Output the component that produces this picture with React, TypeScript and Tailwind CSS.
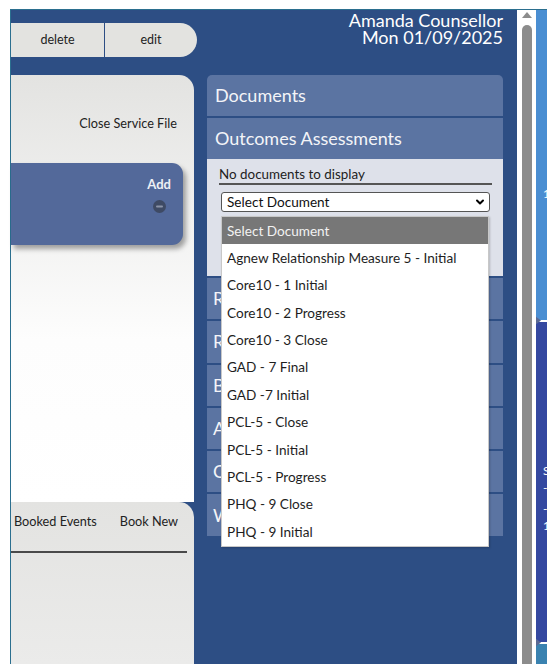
import { ChevronDown } from 'lucide-react';

const documentOptions = [
  'Agnew Relationship Measure 5 - Initial',
  'Core10 - 1 Initial',
  'Core10 - 2 Progress',
  'Core10 - 3 Close',
  'GAD - 7 Final',
  'GAD -7 Initial',
  'PCL-5 - Close',
  'PCL-5 - Initial',
  'PCL-5 - Progress',
  'PHQ - 9 Close',
  'PHQ - 9 Initial',
];

const lowerSections = ['Referrals', 'Reviews', 'Bookings', 'Actions', 'Contacts', 'Waitlist'];

function MinusCircle() {
  return (
    <svg width="13" height="13" viewBox="0 0 13 13">
      <circle cx="6.5" cy="6.5" r="6.5" fill="#3e4a64" />
      <rect x="3" y="5.5" width="7" height="2" rx="1" fill="#8a93a8" />
    </svg>
  );
}

function SectionHeader({ title, className = '' }: { title: string; className?: string }) {
  return (
    <div className={`flex h-[41px] items-center bg-[#5b74a2] pl-[8px] text-[18px] text-[#f4f4f8] ${className}`}>
      {title}
    </div>
  );
}

export default function App() {
  return (
    <div className="h-[664px] w-[547px] overflow-hidden bg-white pl-[10px] pt-[9px] font-['Lato',sans-serif]">
      <div className="flex h-full border-l border-t border-[#2b6f8f] bg-[#2d4e84]">
        {/* main area */}
        <div className="flex w-[506px] shrink-0 flex-col">
          <div className="flex h-[65px] items-start justify-between">
            <div className="mt-[13px] flex h-[34px] w-[186px] rounded-r-[17px] bg-[#e3e3e0] text-[12.5px] text-[#222]">
              <div className="flex w-[94px] items-center justify-center border-r border-[#2d4e84]">delete</div>
              <div className="flex flex-1 items-center justify-center">edit</div>
            </div>
            <div className="pr-[14px] pt-[2px] text-right text-[18px] leading-[17px] text-white">
              <div>Amanda Counsellor</div>
              <div>Mon 01/09/2025</div>
            </div>
          </div>

          <div className="flex flex-1">
            {/* left column */}
            <div className="flex w-[183px] shrink-0 flex-col">
              <div className="h-[427px] rounded-tr-[15px] bg-[linear-gradient(to_bottom,#e3e3e1,#fdfdfd_62%,#ffffff)]">
                <div className="pr-[17px] pt-[41px] text-right text-[12.7px] leading-[15px] text-[#222]">
                  Close Service File
                </div>
                <div className="mr-[11px] mt-[32px] flex h-[82px] flex-col items-end rounded-r-[11px] bg-[#53699a] pr-[12px] pt-[14px] shadow-[3px_4px_5px_rgba(0,0,0,0.35)]">
                  <span className="text-[13px] font-bold leading-[15px] text-[#eef0f5]">Add</span>
                  <div className="mr-[5px] mt-[8px]">
                    <MinusCircle />
                  </div>
                </div>
              </div>
              <div className="flex-1 rounded-tr-[15px] bg-[linear-gradient(to_bottom,#e3e3e1,#ebebea)]">
                <div className="flex gap-[23px] pl-[3px] pt-[12px] text-[12.7px] leading-[15px] text-[#222]">
                  <span>Booked Events</span>
                  <span>Book New</span>
                </div>
                <div className="mr-[7px] mt-[22px] h-[2px] bg-[#4a4a4a]" />
              </div>
            </div>

            {/* documents column */}
            <div className="relative ml-[13px] flex w-[296px] flex-col">
              <SectionHeader title="Documents" className="rounded-t-[5px]" />
              <SectionHeader title="Outcomes Assessments" className="mt-[2px]" />
              <div className="h-[117px] bg-[#dee1ea] pl-[12px] pr-[11px] pt-[7px]">
                <p className="border-b-2 border-[#555] text-[13.4px] leading-[17px] text-[#222]">No documents to display</p>
                <div className="ml-[2px] mr-[2px] mt-[7px] flex h-[20px] items-center justify-between rounded-[3px] border border-[#555] bg-white pl-[5px] pr-[3px] text-[13.6px] text-[#111]">
                  <span>Select Document</span>
                  <ChevronDown size={12} strokeWidth={4} className="text-black" />
                </div>
              </div>
              <div className="mt-[2px] flex flex-col gap-[2px]">
                {lowerSections.map((name) => (
                  <div key={name} className="flex h-[41.3px] items-center bg-[#5b74a2] pl-[6px] text-[18px] text-[#f4f4f8]">
                    {name}
                  </div>
                ))}
              </div>

              {/* open select list */}
              <div className="absolute left-[14px] top-[141px] w-[268px] border border-[#c8c8c8] bg-white text-[13.6px] shadow-[1px_1px_2px_rgba(0,0,0,0.2)]">
                <div className="flex h-[27.4px] items-center bg-[#777777] pl-[5px] text-[#f2f2f2]">Select Document</div>
                {documentOptions.map((option) => (
                  <div key={option} className="flex h-[27.4px] items-center pl-[5px] text-[#1e1e1e]">
                    {option}
                  </div>
                ))}
              </div>
            </div>
          </div>
        </div>

        {/* scrollbar */}
        <div className="flex w-[18px] shrink-0 flex-col items-center bg-white pt-[2px]">
          <svg width="10" height="6" viewBox="0 0 10 6" className="ml-[1px]">
            <path d="M5 0 L10 6 L0 6 Z" fill="#8c8c8c" />
          </svg>
          <div className="ml-[1px] mt-[7px] w-[10px] flex-1 rounded-t-[5px] bg-[#8c8c8c]" />
        </div>

        {/* side panels */}
        <div className="flex flex-1 flex-col overflow-hidden border-l border-white">
          <div className="relative h-[310px] shrink-0 bg-[#4a8ed2] pl-[7px] pt-[176px] text-[12px] leading-[15px] text-white">
            <div>1</div>
          </div>
          <div className="relative h-[2px] shrink-0 bg-white">
            <svg width="6" height="9" viewBox="0 0 6 9" className="absolute -left-px -top-[4px]">
              <path d="M0 0 L6 4.5 L0 9 Z" fill="#5b6a94" />
            </svg>
          </div>
          <div className="h-[320px] shrink-0 bg-[#3448a0] pl-[7px] pt-[140px] text-[12px] leading-[17px] text-white">
            <div>S</div>
            <div>-</div>
            <div className="mt-[4px]">-</div>
            <div>1</div>
          </div>
          <div className="relative h-[2px] shrink-0 bg-white">
            <svg width="6" height="9" viewBox="0 0 6 9" className="absolute -left-px -top-[4px]">
              <path d="M0 0 L6 4.5 L0 9 Z" fill="#5b6a94" />
            </svg>
          </div>
          <div className="flex-1 bg-[#3a82b0]" />
        </div>
      </div>
    </div>
  );
}
